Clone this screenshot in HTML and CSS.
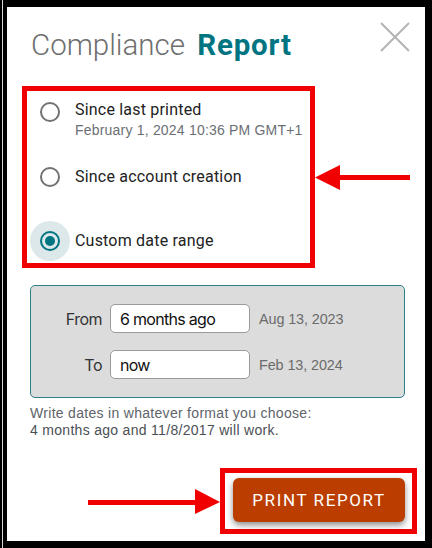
FILE: index.html
```html
<!DOCTYPE html>
<html lang="en">

<head>
    <meta charset="UTF-8">
    <meta name="viewport" content="width=device-width, initial-scale=1.0">
    <title>Compliance Report</title>
    <link rel="stylesheet" href="styles.css">
</head>

<body>
    <div class="panel">
        <header class="top">
            <h1 class="title"><span class="title-light">Compliance</span> <span class="title-bold">Report</span></h1>
            <button class="close" aria-label="Close">
                <svg width="32" height="32" viewBox="0 0 32 32">
                    <path d="M2 2 L30 30 M30 2 L2 30" stroke="#b3b3b3" stroke-width="2" fill="none" />
                </svg>
            </button>
        </header>

        <!-- Opciones de periodo -->
        <div class="callout">
            <div class="options highlight">
                <div class="option option-first">
                    <span class="radio-wrap"><span class="radio"></span></span>
                    <span class="option-text">
                        <span class="option-title">Since last printed</span>
                        <span class="option-sub">February 1, 2024 10:36 PM GMT+1</span>
                    </span>
                </div>
                <div class="option">
                    <span class="radio-wrap"><span class="radio"></span></span>
                    <span class="option-text">
                        <span class="option-title">Since account creation</span>
                    </span>
                </div>
                <div class="option option-last">
                    <span class="radio-wrap checked"><span class="radio"><span class="dot"></span></span></span>
                    <span class="option-text">
                        <span class="option-title">Custom date range</span>
                    </span>
                </div>
            </div>
            <svg class="arrow-left" width="95" height="26" viewBox="0 0 95 26">
                <polygon points="0,12.5 25,0 25,25" fill="#f00000" />
                <rect x="24" y="10" width="71" height="5" fill="#f00000" />
            </svg>
        </div>

        <div class="range">
            <label class="range-label" for="from">From</label>
            <input class="range-input" id="from" type="text" value="6 months ago">
            <span class="range-hint">Aug 13, 2023</span>

            <label class="range-label" for="to">To</label>
            <input class="range-input" id="to" type="text" value="now">
            <span class="range-hint">Feb 13, 2024</span>
        </div>

        <p class="help">Write dates in whatever format you choose:<br><strong>4 months ago and 11/8/2017 will work.</strong></p>

        <div class="actions">
            <svg class="arrow-right" width="132" height="26" viewBox="0 0 132 26">
                <rect x="0" y="11" width="108" height="5" fill="#f00000" />
                <polygon points="107,0 132,13 107,25" fill="#f00000" />
            </svg>
            <div class="highlight action-box">
                <button class="print">PRINT REPORT</button>
            </div>
        </div>
    </div>
</body>

</html>
```

FILE: styles.css
```css
html,
body {
    margin: 0;
    padding: 0;
}

body {
    font-family: Roboto, "Liberation Sans", sans-serif;
    background: linear-gradient(to right, #000 2px, #d8d8d8 2px, #d8d8d8 3px, #000 3px);
    padding: 7px;
    height: 548px;
    box-sizing: border-box;
}

.panel {
    background-color: #fff;
    height: 534px;
    box-sizing: border-box;
}

.top {
    display: flex;
    justify-content: space-between;
    align-items: flex-start;
    padding: 14px 14px 0 24px;
}

.title {
    margin: 8px 0 0;
    font-size: 29.5px;
    line-height: 32px;
    font-weight: normal;
}

.title-light {
    color: #6e6e6e;
    font-weight: 300;
    margin-right: 5px;
}

.title-bold {
    color: #007481;
    font-weight: bold;
    letter-spacing: 0.8px;
}

.close {
    border: none;
    background: none;
    padding: 0;
    width: 32px;
    height: 32px;
    cursor: pointer;
}

.close svg {
    display: block;
}

.callout {
    display: flex;
    align-items: center;
    margin-top: 25px;
    padding-left: 15px;
}

.highlight {
    border: 5px solid #f00000;
}

.options {
    width: 280px;
    height: 169px;
    padding: 1px 0 2px 3px;
    box-sizing: content-box;
}

.option {
    display: flex;
    align-items: flex-start;
    gap: 5px;
    height: 64.5px;
    color: #222;
}

.option-last {
    height: 40px;
}

.radio-wrap {
    width: 40px;
    height: 40px;
    border-radius: 50%;
    display: flex;
    align-items: center;
    justify-content: center;
    flex-shrink: 0;
}

.radio-wrap.checked {
    background-color: #dde8ea;
}

.radio {
    width: 20px;
    height: 20px;
    border: 2px solid #727272;
    border-radius: 50%;
    box-sizing: border-box;
    display: flex;
    align-items: center;
    justify-content: center;
}

.checked .radio {
    border-color: #007481;
}

.dot {
    width: 10px;
    height: 10px;
    border-radius: 50%;
    background-color: #007481;
}

.option-text {
    display: flex;
    flex-direction: column;
    padding-top: 10px;
}

.option-first .option-text {
    padding-top: 8px;
}

.option-title {
    font-size: 16px;
    line-height: 20px;
    letter-spacing: 0.2px;
}

.option-sub {
    font-family: "Liberation Sans", Arial, sans-serif;
    font-size: 14px;
    line-height: 20px;
    color: #6b6f75;
    letter-spacing: 0.2px;
}

.arrow-left {
    display: block;
    margin-top: 1px;
}

.range {
    margin: 17px 20px 0 23px;
    padding: 18px 0;
    background-color: #dcdcdc;
    border: 1px solid #2d7f89;
    border-radius: 5px;
    display: grid;
    grid-template-columns: 71px 140px auto;
    column-gap: 8px;
    row-gap: 17px;
    align-items: center;
}

.range-label {
    text-align: right;
    font-family: Inter, sans-serif;
    font-size: 16px;
    letter-spacing: -0.5px;
    color: #333;
}

.range-input {
    height: 29px;
    box-sizing: border-box;
    border: 1px solid #9a9a9a;
    border-radius: 5px;
    padding: 0 9px;
    font-family: Inter, sans-serif;
    font-size: 16px;
    letter-spacing: -0.7px;
    color: #111;
    background-color: #fff;
}

.range-hint {
    margin-left: 1px;
    font-family: "Liberation Sans", Arial, sans-serif;
    font-size: 14.4px;
    letter-spacing: -0.1px;
    color: #6b6b6b;
}

.help {
    margin: 7px 0 0 23px;
    font-family: "Liberation Sans", Arial, sans-serif;
    font-size: 14px;
    line-height: 17px;
    letter-spacing: 0.3px;
    color: #60646a;
}

.help strong {
    font-weight: normal;
    color: #4b4f55;
}

.actions {
    display: flex;
    justify-content: flex-end;
    align-items: center;
    margin-top: 29px;
    padding-right: 8px;
}

.arrow-right {
    display: block;
    margin-top: 2px;
}

.action-box {
    padding: 5px 7px 7px 8px;
}

.print {
    display: block;
    width: 172px;
    height: 44px;
    background-color: #bb3d00;
    color: #fff;
    border: none;
    border-radius: 6px;
    font-family: Roboto, sans-serif;
    font-size: 17px;
    letter-spacing: 1.6px;
    box-shadow: 0 3px 6px rgba(0, 0, 0, 0.45);
    cursor: pointer;
}
```
